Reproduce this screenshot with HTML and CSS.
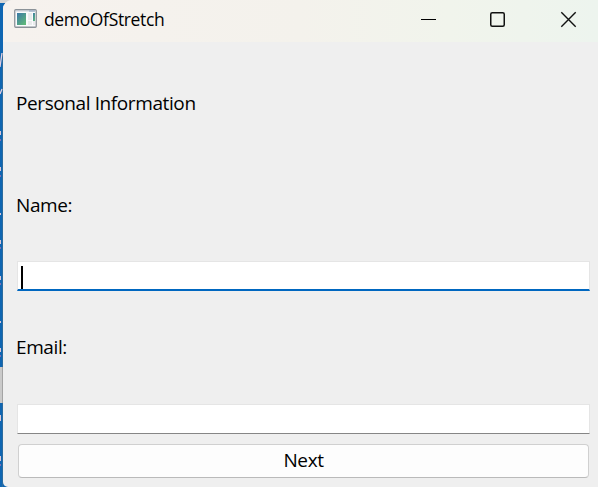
FILE: index.html
```html
<!DOCTYPE html>
<html lang="en">
<head>
<meta charset="utf-8">
<title>demoOfStretch</title>
<link rel="stylesheet" href="styles.css">
</head>
<body>
<div class="desktop">
  <svg class="backdrop" width="14" height="487" viewBox="0 0 14 487" aria-hidden="true">
    <rect width="14" height="487" fill="#0f66b2"/>
    <rect width="14" height="3" fill="#d5d5d5"/>
    <rect x="2" y="53" width="1" height="434" fill="#2c6b9e"/>
    <path d="M2 53L0 67M2 89L0 94" stroke="#e3cfe0" stroke-width="1.3"/>
    <path d="M0 131h1v4h-1zM0 167h1v4h-1zM0 213h1v2h-1zM0 240h1v4h-1zM0 276h1v4h-1zM0 321h1v2h-1zM0 348h1v4h-1zM0 415h1v6h-1zM0 456h1v5h-1z" fill="#d9c6d5"/>
    <path d="M0 139h1v2h-1zM0 175h1v2h-1zM0 247h1v2h-1zM0 283h1v2h-1zM0 355h1v2h-1zM0 464h1v2h-1z" fill="#7e70b3"/>
    <rect y="367" width="2" height="36" fill="#cacaca"/>
    <rect x="2" y="367" width="1" height="36" fill="#a4a4a4"/>
  </svg>
  <main class="window">
    <header class="titlebar">
      <svg class="app-icon" width="23" height="19" viewBox="0 0 23 19">
        <defs><linearGradient id="g" x2=".8" y2="1"><stop stop-color="#3b78a8"/><stop offset="1" stop-color="#5fb879"/></linearGradient></defs>
        <rect x=".75" y=".75" width="21.5" height="17.5" rx="1" fill="#fafbfc" stroke="#8b9298" stroke-width="1.3"/>
        <path d="M1.5 2h20" stroke="#c5cdd6"/>
        <path d="M15 2h6" stroke="#8fa5c2"/>
        <rect x="3" y="4" width="9" height="12" fill="url(#g)"/>
        <path d="M14 4h4v7h-4zM14 12h4v4h-4zM19 12h2v4h-2z" fill="#e9ebec"/>
        <rect x="19" y="4" width="2" height="8" fill="url(#g)"/>
      </svg>
      <span class="title">demoOfStretch</span>
      <svg class="controls" width="160" height="20" viewBox="0 0 160 20" fill="none" stroke="#111">
        <path d="M1 9.5h15" stroke="#000"/>
        <rect x="70.75" y="2.75" width="13.5" height="13.5" rx="1.5" stroke-width="1.5"/>
        <path d="M141.3 2.3l14.4 14.4M155.7 2.3L141.3 16.7" stroke-width="1.4"/>
      </svg>
    </header>
    <form class="form">
      <h1 class="label heading">Personal Information</h1>
      <label class="label name">Name:</label>
      <div class="field focused"><span class="caret"></span></div>
      <label class="label email">Email:</label>
      <div class="field"></div>
      <button class="next" type="button"><span>Next</span></button>
    </form>
  </main>
</div>
</body>
</html>
```
FILE: styles.css
```css
* { box-sizing: border-box; }
body {
  margin: 0;
  overflow: hidden;
  font-family: "Open Sans", "Noto Sans", sans-serif;
  color: #000;
}
.desktop {
  position: relative;
  width: 598px;
  height: 487px;
  padding-left: 3px;
  overflow: hidden;
}
.backdrop { position: absolute; left: 0; top: 0; }
.window {
  position: relative;
  width: 595px;
  height: 487px;
  background: #efefef;
  border-radius: 9px 0 0 5px;
  overflow: hidden;
}
.titlebar {
  display: flex;
  height: 42px;
  padding: 9px 0 0 11px;
  background: linear-gradient(90deg, #f6f2ee 0%, #f4f2ec 50%, #f1f4ec 75%, #edf4ee 100%);
}
.app-icon { flex: none; }
.title {
  width: 376px;
  margin: -2px 0 0 7px;
  font-size: 17.5px;
  line-height: 24px;
  letter-spacing: -0.35px;
}
.controls { flex: none; margin: 1px 0 0 0; }
.form {
  display: flex;
  flex-direction: column;
  padding: 0 8px 0 14px;
}
.label {
  display: block;
  height: 26px;
  margin: 0 0 0 -1px;
  font-size: 19px;
  font-weight: 400;
  line-height: 26px;
  letter-spacing: -0.4px;
}
.heading { margin-top: 48px; }
.name { margin-top: 76px; }
.email { margin-top: 43px; }
.field {
  height: 30px;
  margin: 43px 0 0 0;
  border: 1px solid #e5e5e5;
  border-bottom-color: #868686;
  background: #fff;
}
.focused { border-bottom: 2px solid #0067c0; }
.caret {
  display: block;
  width: 2px;
  height: 23px;
  margin: 4px 0 0 3px;
  background: #000;
}
.email + .field { margin-top: 44px; }
.next {
  height: 34px;
  margin: 10px 1px 0;
  padding: 0 0 2px;
  border: 1px solid #d0d0d0;
  border-bottom-color: #bababa;
  border-radius: 4px;
  background: #fdfdfd;
  color: #000;
  font: 19px/30px "Open Sans", "Noto Sans", sans-serif;
  letter-spacing: -0.4px;
}
```
